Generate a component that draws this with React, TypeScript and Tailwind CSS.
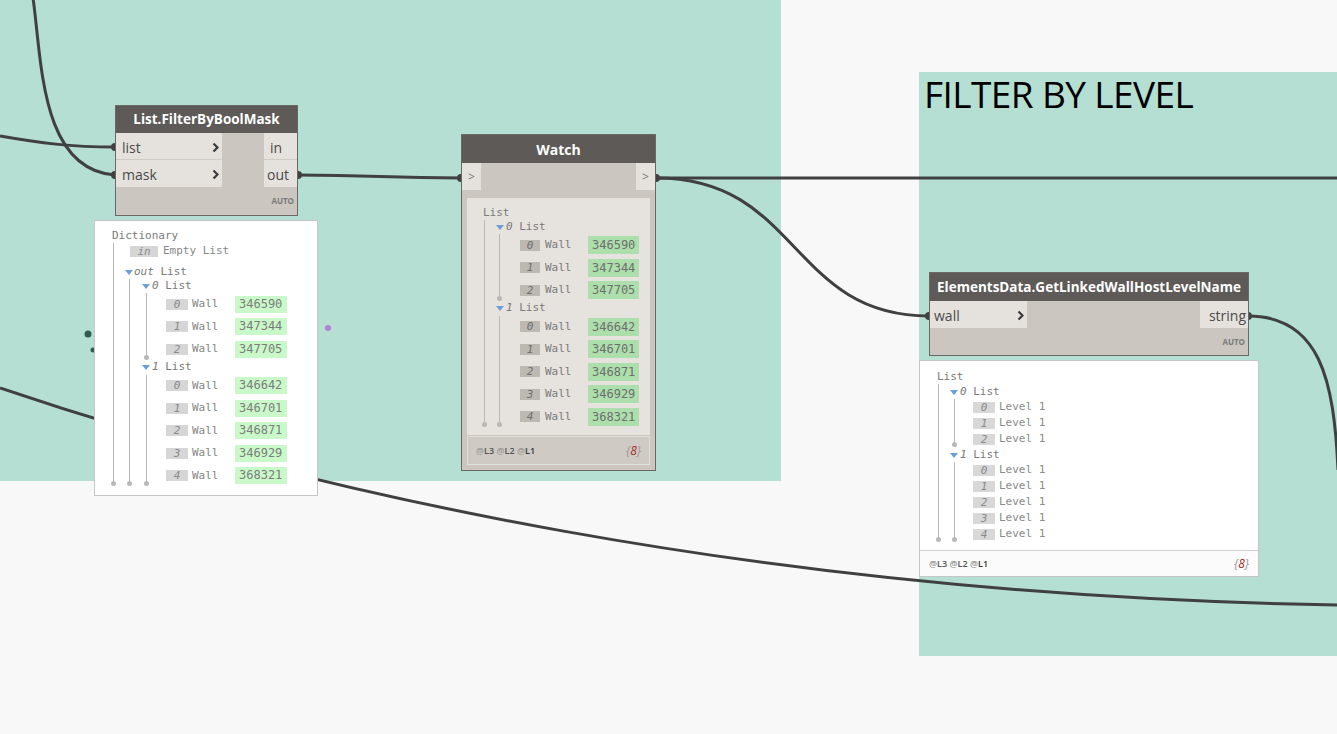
import type { ReactNode } from "react";

const MONO = "font-['DejaVu_Sans_Mono',monospace]";

function Tri() {
  return <span className="inline-block w-0 h-0 border-x-4 border-x-transparent border-t-[5px] border-t-[#6b9fd6]" />;
}

function Chevron() {
  return (
    <svg width="7" height="11" viewBox="0 0 7 11">
      <path d="M1.5 1.5 L5.5 5.5 L1.5 9.5" fill="none" stroke="#3a3a3a" strokeWidth="2.2" />
    </svg>
  );
}

function Branch({ head, col, children, dot }: { head: ReactNode; col: string; children: ReactNode; dot?: string }) {
  return (
    <div>
      {head}
      <div className="flex">
        <div className={`flex flex-col items-center ${col}`}>
          <div className="w-px flex-1 bg-[#b8b8b8]" />
          <div className={`w-[5px] h-[5px] rounded-full bg-[#b8b8b8] ${dot ?? "mb-[1px]"}`} />
        </div>
        <div>{children}</div>
      </div>
    </div>
  );
}

function Head({ idx, className }: { idx: string; className: string }) {
  return (
    <div className={`flex items-center h-[14px] ${className}`}>
      <Tri />
      <span className="ml-[2px] whitespace-pre">
        <span className="italic">{idx}</span>
        {" List"}
      </span>
    </div>
  );
}

const WALLS1 = ["346590", "347344", "347705"];
const WALLS2 = ["346642", "346701", "346871", "346929", "368321"];

function BubbleItem({ i, v }: { i: number; v: string }) {
  return (
    <div className="flex items-center h-[22.5px]">
      <span className="ml-[17px] w-[22px] h-[11px] bg-[#d6d6d6] text-[11px] leading-[11px] italic text-center text-[#8a8a8a]">{i}</span>
      <span className="ml-[4px] w-[43px] text-[#858585]">Wall</span>
      <span className="w-[52px] h-[17px] bg-[#c9f9c9] pl-[4px] text-[12px] leading-[17px] text-[#7c7c7c]">{v}</span>
    </div>
  );
}

function WatchItem({ i, v }: { i: number; v: string }) {
  return (
    <div className="flex items-center h-[22.5px]">
      <span className="ml-[18px] w-[20px] h-[11px] bg-[#bcb8b2] text-[11px] leading-[11px] italic text-center text-[#6f6f6f]">{i}</span>
      <span className="ml-[5px] w-[43px] text-[#7a7a7a]">Wall</span>
      <span className="w-[51px] h-[18px] bg-[#acdfac] pl-[4px] text-[12px] leading-[18px] text-[#6e6e6e]">{v}</span>
    </div>
  );
}

function LevelItem({ i }: { i: number }) {
  return (
    <div className="flex items-center h-[16px]">
      <span className="ml-[16px] w-[22px] h-[11px] bg-[#d8d8d8] text-[11px] leading-[11px] italic text-center text-[#8a8a8a]">{i}</span>
      <span className="ml-[4px] text-[#8a8a8a]">Level 1</span>
    </div>
  );
}

function Levels() {
  return (
    <span className="text-[9px] font-semibold font-['Open_Sans',sans-serif] whitespace-pre">
      <span className="text-[#9a9a9a]">@</span><span className="text-[#555]">L3 </span>
      <span className="text-[#9a9a9a]">@</span><span className="text-[#555]">L2 </span>
      <span className="text-[#9a9a9a]">@</span><span className="text-[#333]">L1</span>
    </span>
  );
}

function Count() {
  return (
    <span className="italic text-[12px] font-['Open_Sans',sans-serif] text-[#999]">
      {"{"}<span className="text-[#a52a2a]">8</span>{"}"}
    </span>
  );
}

export default function App() {
  return (
    <div className="relative w-[1337px] h-[734px] overflow-hidden bg-[#f8f8f8] font-['Open_Sans',sans-serif]">
      {/* groups */}
      <div className="absolute left-0 top-0 w-[781px] h-[481px] bg-[#b4dfd2]" />
      <div className="absolute left-[919px] top-[72px] w-[418px] h-[584px] bg-[#b4dfd2] pl-[5px] pt-[1px]">
        <div className="text-[37px] leading-[42px] text-black tracking-[-0.6px]">FILTER BY LEVEL</div>
      </div>

      {/* wires */}
      <svg className="absolute inset-0" width="1337" height="734">
        <g fill="none" stroke="#404040" strokeWidth="3">
          <path d="M33 -2 C42 60, 40 170, 115 175" />
          <path d="M0 136 C40 143, 70 147, 115 147" />
          <path d="M297 175 C380 175, 380 178, 461 178" />
          <path d="M656 178 L1337 178" />
          <path d="M656 178 C800 178, 790 316, 929 316" />
          <path d="M0 388 C300 490, 760 596, 1340 605" />
          <path d="M1248 316 C1320 316, 1334 380, 1338 470" />
        </g>
        <g fill="#404040">
          <circle cx="115" cy="147" r="4" />
          <circle cx="115" cy="175" r="4" />
          <circle cx="298" cy="175" r="4" />
          <circle cx="461" cy="178" r="4" />
          <circle cx="656" cy="178" r="4" />
          <circle cx="929" cy="316" r="4" />
          <circle cx="1248" cy="316" r="4" />
        </g>
        <circle cx="88" cy="334" r="3.5" fill="#2e5d4d" />
        <circle cx="93" cy="350" r="2.5" fill="#2e5d4d" />
        <circle cx="328" cy="328" r="3" fill="#b283d4" />
      </svg>

      {/* List.FilterByBoolMask */}
      <div className="absolute left-[115px] top-[105px] w-[183px] h-[111px] bg-[#cbc7c0] border border-[#6a6865] flex flex-col">
        <div className="h-[27px] bg-[#5d5a57] text-white font-bold text-[13.5px] flex items-center justify-center">List.FilterByBoolMask</div>
        <div className="flex justify-between">
          <div className="w-[106px]">
            <div className="h-[27px] bg-[#e5e2dd] border-b border-[#cfcbc5] flex items-center justify-between pl-[6px] pr-[3px] pt-[2px] text-[14px] text-[#4a4a4a]">
              list <Chevron />
            </div>
            <div className="h-[27px] bg-[#e5e2dd] flex items-center justify-between pl-[6px] pr-[3px] pt-[2px] text-[14px] text-[#4a4a4a]">
              mask <Chevron />
            </div>
          </div>
          <div className="w-[33px]">
            <div className="h-[27px] bg-[#e5e2dd] border-b border-[#cfcbc5] flex items-center pl-[6px] pt-[2px] text-[14px] text-[#4a4a4a]">in</div>
            <div className="h-[27px] bg-[#e5e2dd] flex items-center pl-[3px] pt-[2px] text-[14px] text-[#4a4a4a]">out</div>
          </div>
        </div>
        <div className="flex-1 flex items-center justify-end pr-[3px] text-[8px] font-bold text-[#7a7a7a]">AUTO</div>
      </div>

      {/* preview bubble 1 */}
      <div className={`absolute left-[94px] top-[220px] w-[224px] h-[276px] bg-white border border-[#c6c6c6] pl-[15px] pt-[8px] text-[11px] text-[#7a7a7a] ${MONO}`}>
        <Branch
          head={<div className="h-[14px] leading-[14px] pl-[2px]">Dictionary</div>}
          col="w-[6px]"
        >
          <div className="flex items-center h-[15px] mt-px">
            <span className="ml-[14px] w-[28px] h-[11px] bg-[#d6d6d6] text-[11px] leading-[11px] italic text-center text-[#8a8a8a]">in</span>
            <span className="ml-[5px] text-[#888]">Empty List</span>
          </div>
          <Branch
            head={
              <div className="flex items-center h-[14px] mt-[6px] ml-[9px]">
                <Tri />
                <span className="ml-px whitespace-pre"><span className="italic">out</span>{" List"}</span>
              </div>
            }
            col="w-[6px] ml-[10px]"
          >
            <Branch head={<Head idx="0" className="ml-[10px]" />} col="w-[6px] ml-[11px]">
              {WALLS1.map((v, i) => <BubbleItem key={v} i={i} v={v} />)}
            </Branch>
            <Branch head={<Head idx="1" className="ml-[10px]" />} col="w-[6px] ml-[11px]">
              {WALLS2.map((v, i) => <BubbleItem key={v} i={i} v={v} />)}
            </Branch>
          </Branch>
        </Branch>
      </div>

      {/* Watch */}
      <div className="absolute left-[461px] top-[134px] w-[195px] h-[337px] bg-[#cbc7c0] border border-[#6a6865] flex flex-col">
        <div className="h-[28px] bg-[#5d5a57] text-white font-bold text-[14px] flex items-center justify-center">Watch</div>
        <div className="h-[27px] flex justify-between">
          <div className="w-[19px] bg-[#e5e2dd] flex items-center justify-center text-[12px] text-[#777]">&gt;</div>
          <div className="w-[19px] bg-[#e5e2dd] flex items-center justify-center text-[12px] text-[#777]">&gt;</div>
        </div>
        <div className={`mx-[5px] mt-[8px] h-[237px] bg-[#e6e3de] pl-[14px] pt-[8px] text-[11px] text-[#7a7a7a] ${MONO}`}>
          <Branch head={<div className="h-[14px] leading-[14px] pl-[2px]">List</div>} col="w-[6px]">
            <Branch head={<Head idx="0" className="ml-[9px]" />} col="w-[6px] ml-[9px]">
              {WALLS1.map((v, i) => <WatchItem key={v} i={i} v={v} />)}
            </Branch>
            <Branch head={<Head idx="1" className="ml-[9px]" />} col="w-[6px] ml-[9px]">
              {WALLS2.map((v, i) => <WatchItem key={v} i={i} v={v} />)}
            </Branch>
          </Branch>
        </div>
        <div className="mx-[5px] mt-px h-[29px] bg-[#cfcbc4] border border-[#e2dfda] flex items-center justify-between px-[8px]">
          <Levels />
          <Count />
        </div>
      </div>

      {/* ElementsData.GetLinkedWallHostLevelName */}
      <div className="absolute left-[929px] top-[272px] w-[320px] h-[84px] bg-[#cbc7c0] border border-[#6a6865] flex flex-col">
        <div className="h-[28px] bg-[#5d5a57] text-white font-bold text-[13.5px] flex items-center justify-center">ElementsData.GetLinkedWallHostLevelName</div>
        <div className="h-[27px] flex justify-between">
          <div className="w-[97px] bg-[#e5e2dd] flex items-center justify-between pl-[4px] pr-[3px] pt-[2px] text-[14px] text-[#4a4a4a]">
            wall <Chevron />
          </div>
          <div className="w-[48px] bg-[#e5e2dd] flex items-center justify-end pr-[2px] pt-[2px] text-[14px] text-[#4a4a4a]">string</div>
        </div>
        <div className="flex-1 flex items-center justify-end pr-[3px] text-[8px] font-bold text-[#7a7a7a]">AUTO</div>
      </div>

      {/* preview bubble 3 */}
      <div className="absolute left-[919px] top-[360px] w-[340px] h-[217px] bg-white border border-[#c6c6c6] flex flex-col">
        <div className={`h-[189px] pl-[15px] pt-[9px] text-[11px] text-[#7a7a7a] ${MONO}`}>
          <Branch head={<div className="h-[14px] leading-[14px] pl-[2px]">List</div>} col="w-[6px]" dot="mb-0">
            <Branch head={<Head idx="0" className="ml-[9px] mt-px" />} col="w-[6px] ml-[10px]" dot="mb-0">
              {[0, 1, 2].map((i) => <LevelItem key={i} i={i} />)}
            </Branch>
            <Branch head={<Head idx="1" className="ml-[9px] mt-px" />} col="w-[6px] ml-[10px]" dot="mb-0">
              {[0, 1, 2, 3, 4].map((i) => <LevelItem key={i} i={i} />)}
            </Branch>
          </Branch>
        </div>
        <div className="flex-1 bg-[#fbfbfb] border-t border-[#d0d0d0] flex items-center justify-between pl-[9px] pr-[9px]">
          <Levels />
          <Count />
        </div>
      </div>
    </div>
  );
}
